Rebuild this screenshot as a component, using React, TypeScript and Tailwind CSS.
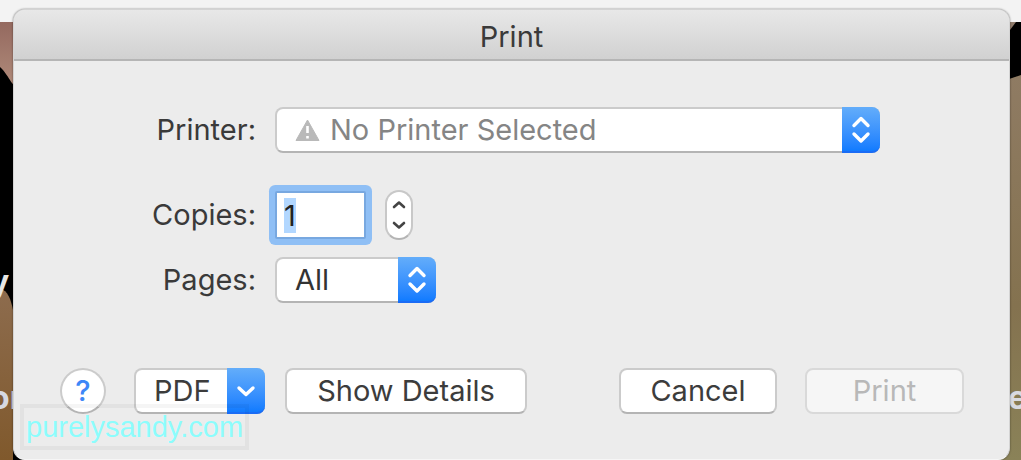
import { useEffect, useRef, useState } from "react";
import type { ReactNode } from "react";

const BUTTON =
  "h-[46px] rounded-lg border-2 border-[#cbcbcb] border-b-[#b4b4b4] bg-white text-center text-[#3c3c3c]";

/** Up/down chevrons in the blue cap of a pop-up button */
function UpDownArrows() {
  return (
    <svg width="20" height="30" viewBox="0 0 20 30" fill="none" stroke="#fff" strokeWidth="3.4" strokeLinecap="round" strokeLinejoin="round">
      <path d="M3 11.5 10 4.5 17 11.5" />
      <path d="M3 20 10 27 17 20" />
    </svg>
  );
}

function BlueCap({ children }: { children: ReactNode }) {
  return (
    <span className="pointer-events-none absolute inset-y-0 right-0 flex w-[38px] items-center justify-center rounded-r-lg border-b-2 border-[#1a6cf5] bg-linear-to-b from-[#63adfa] to-[#0f7bff]">
      {children}
    </span>
  );
}

/** Desktop that shows at both sides of the dialog */
function Backdrop() {
  return (
    <div aria-hidden="true" className="absolute inset-0 flex justify-between overflow-hidden bg-[#f3f3f3]">
      <svg width="24" height="460" viewBox="0 0 24 460">
        <defs>
          <linearGradient id="skin" x1="0" y1="0" x2="0" y2="1">
            <stop offset="0" stopColor="#94695f" />
            <stop offset="1" stopColor="#b28d7c" />
          </linearGradient>
          <linearGradient id="wood" x1="0" y1="0" x2="0" y2="1">
            <stop offset="0" stopColor="#8d6c4e" />
            <stop offset="1" stopColor="#80592c" />
          </linearGradient>
        </defs>
        <rect y="22" width="24" height="438" fill="#000" />
        <path d="M0 22H24V90C12 90 10 76 0 67Z" fill="url(#skin)" />
        <path d="M0 289C8 290 11 300 13 310V460H0Z" fill="url(#wood)" />
        <text x="-10" y="293" fill="#e8e6e4" fontSize="32" fontWeight="700" fontFamily="Inter, sans-serif">y</text>
        <text x="-10" y="409" fill="#d6d9e2" fontSize="32" fontWeight="700" fontFamily="Inter, sans-serif">or</text>
      </svg>
      <svg width="24" height="460" viewBox="0 0 24 460">
        <defs>
          <linearGradient id="sand" x1="0" y1="0" x2="0" y2="1">
            <stop offset="0" stopColor="#8f7b63" />
            <stop offset="0.6" stopColor="#84724f" />
            <stop offset="1" stopColor="#8a8258" />
          </linearGradient>
        </defs>
        <rect y="22" width="24" height="438" fill="#000" />
        <path d="M12 22H19L13 30Z" fill="#8f7b6b" />
        <path d="M12 79 24 75V460H0V79Z" fill="url(#sand)" />
        <text x="11" y="409" fill="#d9dae0" fontSize="32" fontWeight="700" fontFamily="Inter, sans-serif">e</text>
      </svg>
    </div>
  );
}

function Stepper({ onStep }: { onStep: (delta: number) => void }) {
  return (
    <div className="flex h-[50px] w-7 flex-col overflow-hidden rounded-full border-2 border-[#c8c8c8] border-b-[#b4b4b4] bg-white">
      <button type="button" aria-label="Increase copies" onClick={() => onStep(1)} className="flex flex-1 items-end justify-center pb-1">
        <svg width="14" height="9" viewBox="0 0 14 9" fill="none" stroke="#444" strokeWidth="2.6" strokeLinecap="round" strokeLinejoin="round">
          <path d="M2 7 7 2.5 12 7" />
        </svg>
      </button>
      <button type="button" aria-label="Decrease copies" onClick={() => onStep(-1)} className="flex flex-1 items-start justify-center pt-2">
        <svg width="14" height="9" viewBox="0 0 14 9" fill="none" stroke="#444" strokeWidth="2.6" strokeLinecap="round" strokeLinejoin="round">
          <path d="M2 2 7 6.5 12 2" />
        </svg>
      </button>
    </div>
  );
}

export default function App() {
  const [copies, setCopies] = useState("1");
  const copiesRef = useRef<HTMLInputElement>(null);

  // the copies field opens focused with its value selected
  useEffect(() => {
    copiesRef.current?.focus();
    copiesRef.current?.select();
  }, []);

  const step = (delta: number) =>
    setCopies((value) => String(Math.max(1, (Number(value) || 1) + delta)));

  return (
    <main className="relative min-h-screen pt-[9px] pr-[11px] pl-[13px] font-['Inter',sans-serif] text-[29px] leading-9 text-[#3a3a3a]">
      <Backdrop />

      <form
        onSubmit={(e) => e.preventDefault()}
        className="relative overflow-hidden rounded-xl border border-[#d4d4d4] border-b-[#f6f6f6] bg-[#ececec] shadow-[0_0_2px_rgba(0,0,0,0.5)]"
      >
        <header className="flex h-[51px] items-center justify-center border-b-2 border-[#b5b5b5] bg-linear-to-b from-[#e8e8e8] to-[#d1d1d1] pt-1">
          <h1>Print</h1>
        </header>

        <div className="flex flex-col pt-[46px] pr-[129px]">
          <div className="flex items-center gap-[19px]">
            <label htmlFor="printer" className="w-[242px] text-right">Printer:</label>
            <div className="relative flex-1">
              <select
                id="printer"
                className="block h-[46px] w-full appearance-none rounded-lg border-2 border-[#cbcbcb] border-b-[#b4b4b4] bg-white pl-[53px] text-[#858585]"
              >
                <option>No Printer Selected</option>
              </select>
              <svg className="pointer-events-none absolute top-3 left-5" width="25" height="22" viewBox="0 0 25 22">
                <path d="M12.5 1 24 21.5H1Z" fill="#b9b9b9" stroke="#b9b9b9" strokeLinejoin="round" />
                <path d="M12.5 7V14M12.5 17V19.4" stroke="#fff" strokeWidth="2.6" />
              </svg>
              <BlueCap><UpDownArrows /></BlueCap>
            </div>
          </div>

          <div className="mt-[37px] flex items-center gap-[19px]">
            <label htmlFor="copies" className="w-[242px] text-right">Copies:</label>
            <input
              id="copies"
              ref={copiesRef}
              value={copies}
              onChange={(e) => setCopies(e.target.value)}
              className="h-[48px] w-[91px] rounded-xs border-2 border-[#78a8e0] bg-white pl-[7px] text-[#222] ring-6 ring-[#8fbff5] outline-none selection:bg-[#b2d7ff] selection:text-[#222]"
            />
            <Stepper onStep={step} />
          </div>

          <div className="mt-[17px] flex items-center gap-[19px]">
            <label htmlFor="pages" className="w-[242px] text-right">Pages:</label>
            <div className="relative">
              <select
                id="pages"
                className="block h-[46px] w-[161px] appearance-none rounded-lg border-2 border-[#cbcbcb] border-b-[#b4b4b4] bg-white pl-[18px] text-[#333]"
              >
                <option>All</option>
                <option>From</option>
              </select>
              <BlueCap><UpDownArrows /></BlueCap>
            </div>
          </div>
        </div>

        <footer className="flex items-center pt-[65px] pr-[45px] pb-[45px] pl-[46px]">
          <button type="button" aria-label="Help" className="size-[46px] rounded-full border-2 border-[#cbcbcb] border-b-[#b4b4b4] bg-white text-center font-medium text-[#3d87f7]">
            ?
          </button>
          <button type="button" className={`${BUTTON} relative ml-7 w-[131px] pl-[18px] text-left`}>
            PDF
            <span className="pointer-events-none absolute -inset-y-0.5 -right-0.5 flex w-[38px] items-center justify-center rounded-r-lg border-b-2 border-[#1a6cf5] bg-linear-to-b from-[#63adfa] to-[#0f7bff]">
              <svg width="20" height="13" viewBox="0 0 20 13" fill="none" stroke="#fff" strokeWidth="3.4" strokeLinecap="round" strokeLinejoin="round">
                <path d="M3 4 10 10.5 17 4" />
              </svg>
            </span>
          </button>
          <button type="button" className={`${BUTTON} ml-5 w-[242px]`}>Show Details</button>
          <button type="button" className={`${BUTTON} ml-auto w-[158px]`}>Cancel</button>
          <button type="submit" disabled className="ml-7 h-[46px] w-[159px] rounded-lg border-2 border-[#d9d9d9] bg-[#f6f6f6] text-center text-[#b8b8b8]">
            Print
          </button>
        </footer>
      </form>

      <p className="absolute bottom-2.5 left-5 border-4 border-black/4 px-0.5 font-['Liberation_Sans',sans-serif] leading-[38px] text-[#8cfdfd]">
        purelysandy.com
      </p>
    </main>
  );
}
